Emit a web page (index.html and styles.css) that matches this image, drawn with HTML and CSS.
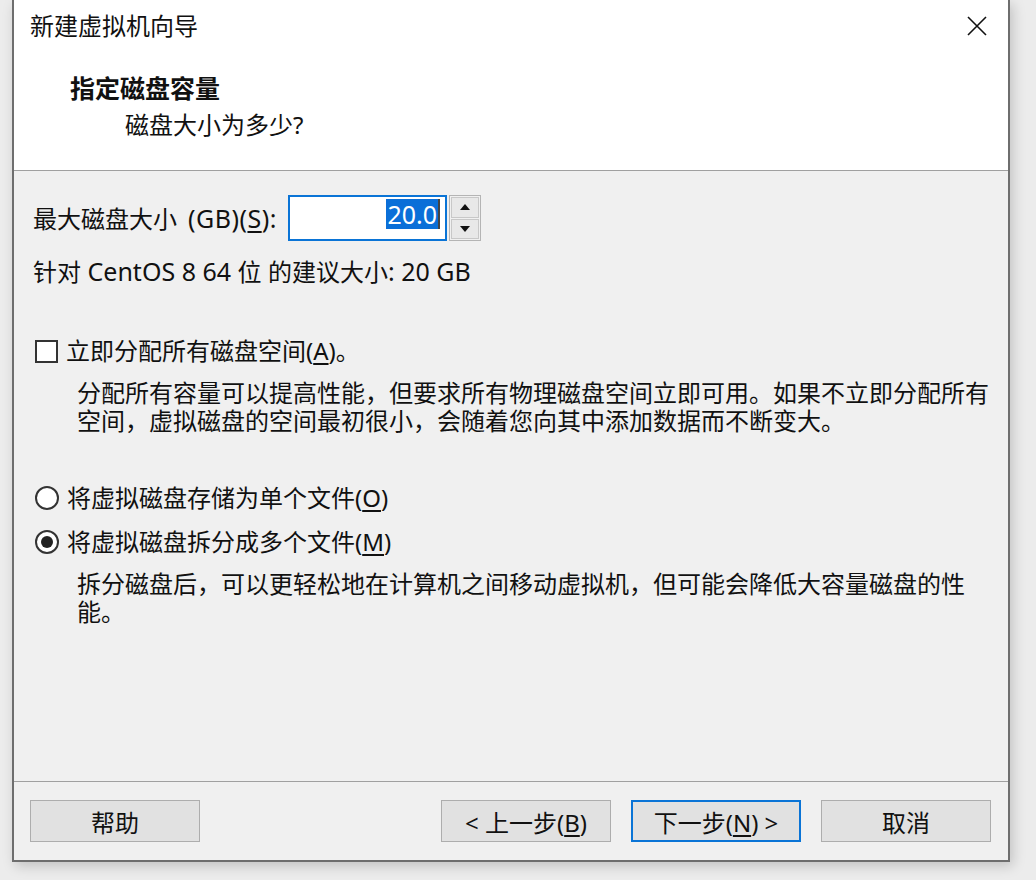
FILE: index.html
```html
<!DOCTYPE html>
<html lang="zh-CN">
<head>
<meta charset="utf-8">
<title>新建虚拟机向导</title>
<link rel="stylesheet" href="styles.css">
</head>
<body>
<div class="win">
  <div class="header">
    <div class="titlebar">
      <span class="title">新建虚拟机向导</span>
      <svg class="close" viewBox="0 0 20 20" width="20" height="20"><path d="M1 1L19 19M19 1L1 19" stroke="#111" stroke-width="1.6" fill="none"/></svg>
    </div>
    <div class="heading">指定磁盘容量</div>
    <div class="sub">磁盘大小为多少?</div>
  </div>
  <div class="body">
    <div class="size-row">
      <span class="size-label">最大磁盘大小<span class="lat"> (GB)(<u>S</u>):</span></span>
      <div class="spin">
        <div class="input"><span class="sel lat">20.0</span><span class="caret"></span></div>
        <div class="arrows">
          <div class="arrow"><svg viewBox="0 0 10 6" width="10" height="6"><path d="M0 6L5 0L10 6Z" fill="#111"/></svg></div>
          <div class="arrow"><svg viewBox="0 0 10 6" width="10" height="6"><path d="M0 0L10 0L5 6Z" fill="#111"/></svg></div>
        </div>
      </div>
    </div>
    <div class="rec">针对<span class="lat"> CentOS 8 64 </span>位<span class="lat"> </span>的建议大小<span class="lat">: 20 GB</span></div>
    <div class="opt opt-check"><span class="box"></span><span>立即分配所有磁盘空间(<u>A</u>)。</span></div>
    <p class="desc">分配所有容量可以提高性能，但要求所有物理磁盘空间立即可用。如果不立即分配所有空间，虚拟磁盘的空间最初很小，会随着您向其中添加数据而不断变大。</p>
    <div class="opt opt-r1"><span class="radio"></span><span>将虚拟磁盘存储为单个文件(<u>O</u>)</span></div>
    <div class="opt opt-r2"><span class="radio on"></span><span>将虚拟磁盘拆分成多个文件(<u>M</u>)</span></div>
    <p class="desc">拆分磁盘后，可以更轻松地在计算机之间移动虚拟机，但可能会降低大容量磁盘的性能。</p>
  </div>
  <div class="footer">
    <div class="btn">帮助</div>
    <div class="spacer"></div>
    <div class="btn">&lt; 上一步(<u>B</u>)</div>
    <div class="btn default">下一步(<u>N</u>) &gt;</div>
    <div class="btn">取消</div>
  </div>
</div>
</body>
</html>
```
FILE: styles.css
```css
* { box-sizing: border-box; }
html, body { margin: 0; padding: 0; }
body {
  background: #ececec;
  width: 1036px;
  height: 880px;
  overflow: hidden;
  font-family: "Noto Sans", "Noto Sans CJK SC", sans-serif;
  font-size: 24px;
  color: #111;
}
u { text-underline-offset: 3px; text-decoration-thickness: 1.5px; }
.lat { font-size: 25px; }
.win {
  margin-left: 12px;
  width: 998px;
  height: 862px;
  background: #f0f0f0;
  border-left: 2px solid #6e6e6e;
  border-right: 2px solid #6e6e6e;
  border-bottom: 2px solid #6e6e6e;
  box-shadow: 3px 4px 12px rgba(0,0,0,0.18);
  display: flex;
  flex-direction: column;
}
.header {
  height: 171px;
  background: #fff;
  border-bottom: 1px solid #a0a0a0;
}
.titlebar {
  height: 54px;
  display: flex;
  align-items: center;
  justify-content: space-between;
  padding: 0 21px 2px 16px;
}
.title { line-height: 32px; }
.close { display: block; }
.heading {
  margin-top: 18px;
  padding-left: 56px;
  font-weight: bold;
  font-size: 25px;
  line-height: 32px;
}
.sub {
  margin-top: 5px;
  padding-left: 111px;
  line-height: 32px;
}
.body {
  height: 610px;
  padding-left: 19px;
}
.size-row {
  margin-top: 24px;
  height: 46px;
  display: flex;
  align-items: center;
}
.size-label { line-height: 30px; width: 255px; white-space: nowrap; }
.size-label .lat { word-spacing: 4px; letter-spacing: 0.5px; }
.spin { display: flex; height: 46px; gap: 2px; }
.input {
  width: 159px;
  height: 46px;
  background: #fff;
  border: 2px solid #0a74d6;
  display: flex;
  align-items: center;
  justify-content: flex-end;
  padding-right: 5px;
}
.sel {
  background: #0a6fd8;
  color: #fff;
  line-height: 30px;
  padding: 0 1px;
  margin-top: -8px;
}
.caret {
  width: 2px;
  height: 30px;
  background: #444;
  margin-top: -8px;
}
.arrows {
  width: 32px;
  height: 46px;
  border: 1px solid #b4b4b4;
  background: #f0f0f0;
  display: flex;
  flex-direction: column;
  gap: 1px;
  padding: 1px;
}
.arrow {
  flex: 1;
  background: #e8e8e8;
  border: 1px solid #c8c8c8;
  display: flex;
  align-items: center;
  justify-content: center;
}
.arrow svg { display: block; }
.rec {
  margin-top: 15px;
  line-height: 30px;
}
.opt {
  display: flex;
  align-items: center;
  gap: 8px;
  line-height: 30px;
  padding-left: 2px;
}
.opt-check { margin-top: 49px; }
.opt-r1 { margin-top: 48px; }
.opt-r2 { margin-top: 14px; }
.box {
  width: 23px;
  height: 23px;
  background: #fff;
  border: 2px solid #333;
  flex: none;
}
.radio {
  width: 24px;
  height: 24px;
  border-radius: 50%;
  border: 2px solid #333;
  background: #fff;
  flex: none;
  display: flex;
  align-items: center;
  justify-content: center;
}
.radio.on::after {
  content: "";
  width: 12px;
  height: 12px;
  border-radius: 50%;
  background: #222;
}
.desc {
  margin: 13px 0 0;
  padding-left: 44px;
  padding-right: 18px;
  line-height: 28px;
}
.footer {
  border-top: 1px solid #a0a0a0;
  padding: 18px 17px 0 16px;
  display: flex;
  gap: 20px;
}
.spacer { flex: 1; }
.btn {
  width: 170px;
  height: 42px;
  background: #e1e1e1;
  border: 1px solid #adadad;
  display: flex;
  align-items: center;
  justify-content: center;
  line-height: 30px;
  padding-top: 3px;
}
.btn.default {
  border: 2px solid #0a74d6;
}
```
